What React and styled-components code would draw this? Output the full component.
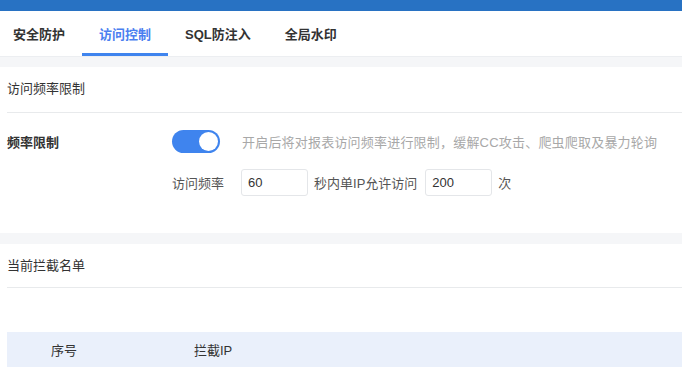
import React, { useState } from "react";
import styled, { createGlobalStyle } from "styled-components";

const Global = createGlobalStyle`
  html, body { margin: 0; padding: 0; background: #f5f6f8; }
  body { font-family: "Liberation Sans", "Noto Sans CJK SC", sans-serif; font-size: 13px; color: #333; }
  * { box-sizing: border-box; }
`;

const Page = styled.div`
  width: 682px;
  height: 387px;
  overflow: hidden;
  background: #f5f6f8;
  display: flex;
  flex-direction: column;
`;

const TopBar = styled.div`
  height: 11px;
  background: #2872c3;
  flex: none;
`;

const TabBar = styled.nav`
  height: 46px;
  background: #fff;
  display: flex;
  align-items: stretch;
  gap: 34px;
  padding-left: 13px;
  flex: none;
  border-bottom: 1px solid #eceef1;
`;

const Tab = styled.div`
  position: relative;
  display: flex;
  align-items: center;
  font-size: 13px;
  font-weight: bold;
  color: ${(p) => (p.$active ? "#4b7ff0" : "#333")};
  &::after {
    content: "";
    display: ${(p) => (p.$active ? "block" : "none")};
    position: absolute;
    left: -17px;
    right: -17px;
    bottom: 0;
    height: 3px;
    background: #3f84ee;
  }
`;

const Card = styled.section`
  background: #fff;
  margin-top: ${(p) => p.$mt}px;
  padding-left: 7px;
  flex: ${(p) => (p.$grow ? "1" : "none")};
`;

const CardTitle = styled.div`
  height: ${(p) => p.$h}px;
  display: flex;
  align-items: center;
  font-size: 13px;
  color: #333;
  border-bottom: 1px solid #e8eaec;
  padding-bottom: ${(p) => p.$pb || 0}px;
`;

const FormBody = styled.div`
  padding: 16px 0 37px;
  display: flex;
  flex-direction: column;
  gap: 16px;
`;

const FormRow = styled.div`
  display: flex;
  align-items: center;
  min-height: ${(p) => p.$h}px;
`;

const Label = styled.div`
  width: 165px;
  font-weight: bold;
  color: #333;
  flex: none;
`;

const Switch = styled.button`
  width: 48px;
  height: 23px;
  border-radius: 12px;
  border: none;
  padding: 0;
  background: ${(p) => (p.$on ? "#3f84ee" : "#ccc")};
  position: relative;
  cursor: pointer;
  flex: none;
  &::after {
    content: "";
    position: absolute;
    top: 2px;
    left: ${(p) => (p.$on ? "27px" : "2px")};
    width: 19px;
    height: 19px;
    border-radius: 50%;
    background: #fff;
  }
`;

const Hint = styled.span`
  margin-left: 22px;
  color: #a8a8a8;
  font-size: 13px;
  letter-spacing: 0.2px;
`;

const Text = styled.span`
  color: #555;
  margin-right: ${(p) => p.$mr || 0}px;
`;

const Input = styled.input`
  width: 67px;
  height: 27px;
  border: 1px solid #e4e6e9;
  border-radius: 3px;
  padding: 0 6px;
  font-family: "Liberation Sans", sans-serif;
  font-size: 13px;
  color: #333;
  margin-right: 6px;
  outline: none;
`;

const Spacer = styled.div`
  height: 44px;
`;

const TableHead = styled.div`
  height: 35px;
  background: #eaf0fb;
  display: flex;
  align-items: center;
  color: #333;
`;

const Th = styled.div`
  width: ${(p) => p.$w}px;
  padding-left: ${(p) => p.$pl}px;
  flex: none;
`;

export default function App() {
  const [on, setOn] = useState(true);
  return (
    <Page>
      <Global />
      <TopBar />
      <TabBar>
        <Tab>安全防护</Tab>
        <Tab $active>访问控制</Tab>
        <Tab>SQL防注入</Tab>
        <Tab>全局水印</Tab>
      </TabBar>
      <Card $mt={10}>
        <CardTitle $h={46} $pb={4}>访问频率限制</CardTitle>
        <FormBody>
          <FormRow $h={24}>
            <Label>频率限制</Label>
            <Switch $on={on} onClick={() => setOn(!on)} aria-label="频率限制" />
            <Hint>开启后将对报表访问频率进行限制，缓解CC攻击、爬虫爬取及暴力轮询</Hint>
          </FormRow>
          <FormRow $h={27}>
            <Label />
            <Text $mr={17}>访问频率</Text>
            <Input defaultValue="60" />
            <Text $mr={8}>秒内单IP允许访问</Text>
            <Input defaultValue="200" />
            <Text>次</Text>
          </FormRow>
        </FormBody>
      </Card>
      <Card $mt={11} $grow>
        <CardTitle $h={44} $pb={2}>当前拦截名单</CardTitle>
        <Spacer />
        <TableHead>
          <Th $w={187} $pl={44}>序号</Th>
          <Th $w={200} $pl={0}>拦截IP</Th>
        </TableHead>
      </Card>
    </Page>
  );
}
